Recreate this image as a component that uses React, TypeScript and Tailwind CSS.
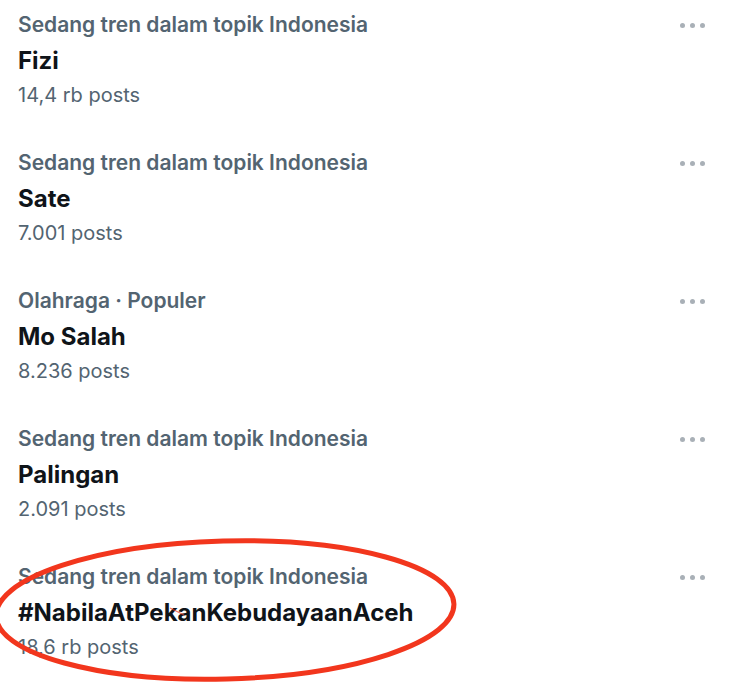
import React from "react";

type Trend = { category: string; title: string; posts: string };

const TRENDS: Trend[] = [
  { category: "Sedang tren dalam topik Indonesia", title: "Fizi", posts: "14,4 rb posts" },
  { category: "Sedang tren dalam topik Indonesia", title: "Sate", posts: "7.001 posts" },
  { category: "Olahraga · Populer", title: "Mo Salah", posts: "8.236 posts" },
  { category: "Sedang tren dalam topik Indonesia", title: "Palingan", posts: "2.091 posts" },
  { category: "Sedang tren dalam topik Indonesia", title: "#NabilaAtPekanKebudayaanAceh", posts: "18,6 rb posts" },
];

function MoreDots() {
  return (
    <div className="self-start flex items-center gap-[5px] pt-[11px]">
      <span className="w-[5px] h-[5px] rounded-full bg-[#a9b0b7]" />
      <span className="w-[5px] h-[5px] rounded-full bg-[#a9b0b7]" />
      <span className="w-[5px] h-[5px] rounded-full bg-[#a9b0b7]" />
    </div>
  );
}

function TrendRow({ trend }: { trend: Trend }) {
  return (
    <div className="h-[138px] flex items-start justify-between pl-[18px] pr-[24px] pt-[12px]">
      <div className="flex flex-col">
        <div className="text-[21px] leading-[26px] font-semibold text-[#536471]">{trend.category}</div>
        <div className="mt-[8px] text-[24px] leading-[30px] font-bold text-[#0f1419]">{trend.title}</div>
        <div className="mt-[6px] text-[20px] leading-[26px] text-[#536471]">{trend.posts}</div>
      </div>
      <MoreDots />
    </div>
  );
}

export default function App() {
  return (
    <div
      className="relative w-[729px] h-[682px] overflow-hidden bg-white"
      style={{ fontFamily: "Inter, 'Noto Sans', Arial, sans-serif" }}
    >
      <div className="flex flex-col">
        {TRENDS.map((t, i) => (
          <TrendRow key={i} trend={t} />
        ))}
      </div>
      {/* red marker ellipse drawn over the last trend */}
      <svg className="absolute left-0 top-0 pointer-events-none" width="729" height="682">
        <ellipse
          cx="225"
          cy="610"
          rx="229"
          ry="69"
          transform="rotate(-1.5 225 610)"
          fill="none"
          stroke="#f2361d"
          strokeWidth="5"
        />
        <path d="M170 608 L184 615" stroke="#f2361d" strokeWidth="1.2" opacity="0.7" />
      </svg>
    </div>
  );
}
